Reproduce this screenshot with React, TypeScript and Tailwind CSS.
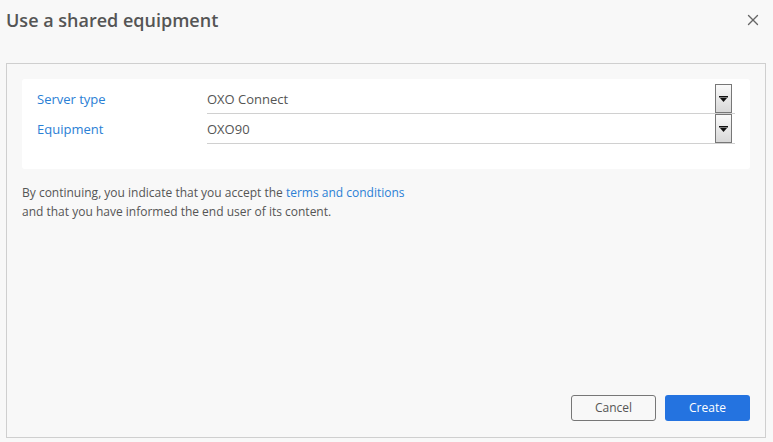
import { X } from 'lucide-react';

const rows = [
  { label: 'Server type', value: 'OXO Connect' },
  { label: 'Equipment', value: 'OXO90' },
];

function SelectArrow() {
  return (
    <div className="absolute right-[3px] top-0 flex h-[29px] w-[17px] items-center justify-center border border-[#777] bg-gradient-to-b from-[#fafafa] to-[#d8d8d8]">
      <svg width="9" height="6" viewBox="0 0 9 6">
        <rect x="0" y="0" width="9" height="1.5" fill="#111" />
        <polygon points="1,2 8,2 4.5,6" fill="#111" />
      </svg>
    </div>
  );
}

export default function App() {
  return (
    <div className="flex h-[442px] w-[773px] flex-col bg-[#f8f8f8] font-['Open_Sans',sans-serif] text-[#555]">
      <div className="flex h-[63px] items-start justify-between pl-[6px] pr-[11px] pt-[6px]">
        <h1 className="text-[18px] font-semibold leading-[28px] text-[#555]">Use a shared equipment</h1>
        <button className="mt-[5px] text-[#666]">
          <X size={18} strokeWidth={1.8} />
        </button>
      </div>

      <div className="mb-[4px] ml-[6px] mr-[7px] flex flex-1 flex-col border border-[#cfcfcf] px-[15px] pb-[16px] pt-[15px]">
        <div className="rounded-[3px] bg-white px-[15px] pb-[25px] pt-[5px]">
          {rows.map((r) => (
            <div key={r.label} className="flex h-[30px] items-center">
              <div className="w-[170px] pt-[2px] text-[13px] text-[#2a80d5]">{r.label}</div>
              <div className="relative flex h-[30px] flex-1 items-center border-b border-[#d0d0d0] pt-[2px] text-[13px] text-[#555]">
                {r.value}
                <SelectArrow />
              </div>
            </div>
          ))}
        </div>

        <p className="mt-[14px] text-[12px] leading-[19px] text-[#555]">
          By continuing, you indicate that you accept the{' '}
          <a className="text-[#2a80d5]">terms and conditions</a>
          <br />
          and that you have informed the end user of its content.
        </p>

        <div className="mt-auto flex justify-end gap-[9px]">
          <button className="h-[26px] w-[85px] rounded-[3px] border border-[#777] bg-[#f8f8f8] text-[12px] text-[#555]">
            Cancel
          </button>
          <button className="h-[26px] w-[85px] rounded-[3px] bg-[#2473e0] text-[12px] text-white">
            Create
          </button>
        </div>
      </div>
    </div>
  );
}
